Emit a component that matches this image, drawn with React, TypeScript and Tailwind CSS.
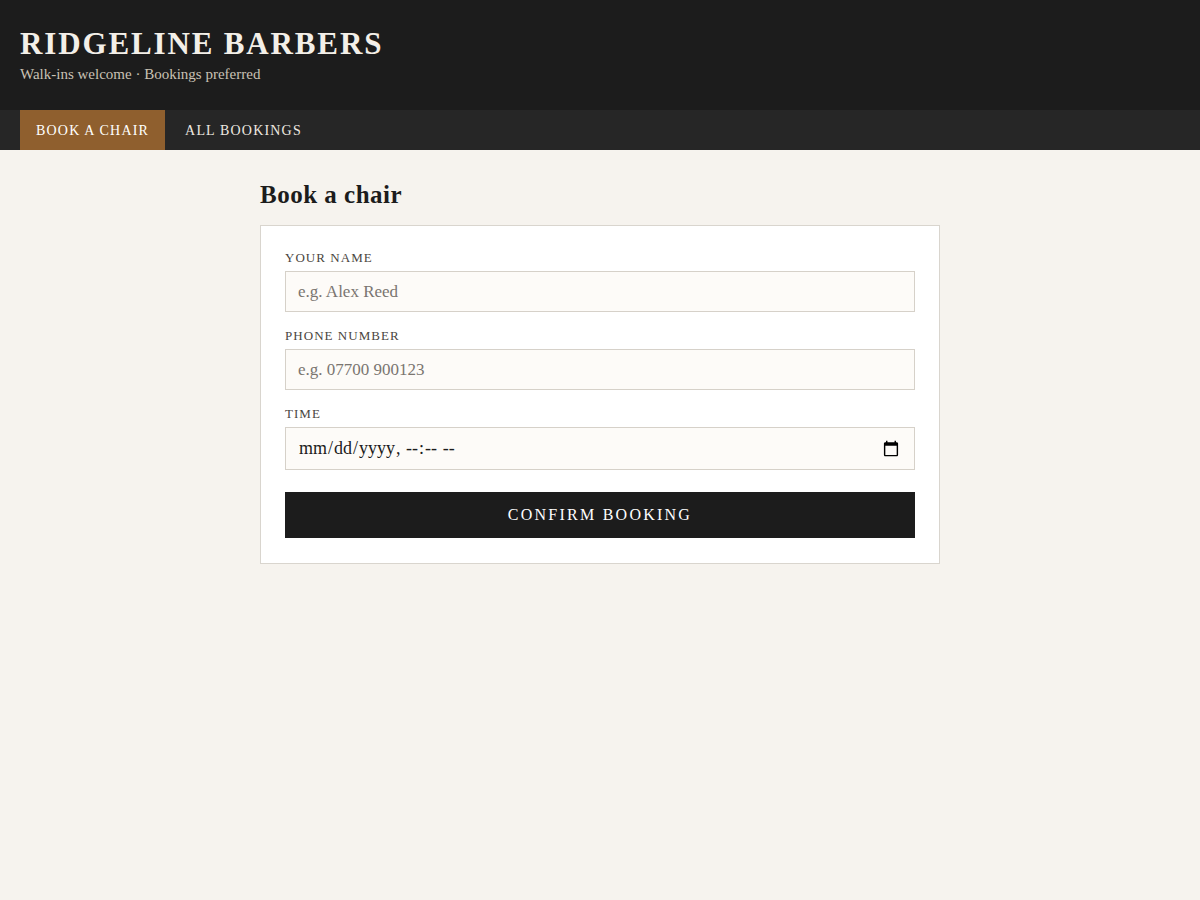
import React from 'react';

const serif = { fontFamily: '"Liberation Serif", "DejaVu Serif", serif' };

function Field({ label, children }: { label: string; children: React.ReactNode }) {
  return (
    <div className="flex flex-col">
      <label className="text-[13px] uppercase tracking-[0.08em] text-[#4a4540] mb-[5px] leading-[16px]">{label}</label>
      {children}
    </div>
  );
}

export default function App() {
  const inputClass =
    'w-full bg-[#fdfbf8] border border-[#d6d1c9] px-[12px] text-[17px] text-[#1c1c1c] placeholder:text-[#7a7570] outline-none';

  return (
    <div className="min-h-[900px] bg-[#f6f3ee] text-[#1c1c1c]" style={serif}>
      {/* Header */}
      <header className="bg-[#1c1c1c] h-[110px] px-[20px] pt-[27px]">
        <h1 className="text-[31px] font-bold tracking-[0.06em] text-[#f3efe8] leading-[34px]">RIDGELINE BARBERS</h1>
        <p className="text-[15px] text-[#c9c1b4] mt-[4px] leading-[18px]">Walk-ins welcome · Bookings preferred</p>
      </header>

      {/* Nav */}
      <nav className="bg-[#262626] h-[40px] px-[20px] flex">
        <a className="h-full px-[16px] flex items-center bg-[#8f5f2e] text-white text-[14px] uppercase tracking-[0.085em]">
          Book a chair
        </a>
        <a className="h-full px-[20px] flex items-center text-[#eee9e1] text-[14px] uppercase tracking-[0.085em]">
          All bookings
        </a>
      </nav>

      {/* Main */}
      <main className="w-[680px] mx-auto pt-[30px]">
        <h2 className="text-[25px] font-bold leading-[30px] mb-[15px] tracking-[0.02em]">Book a chair</h2>
        <div className="bg-white border border-[#d9d5ce] px-[24px] pt-[24px] pb-[25px] flex flex-col gap-[16px]">
          <Field label="Your name">
            <input className={inputClass + ' h-[41px]'} style={serif} placeholder="e.g. Alex Reed" />
          </Field>
          <Field label="Phone number">
            <input className={inputClass + ' h-[41px]'} style={serif} placeholder="e.g. 07700 900123" />
          </Field>
          <Field label="Time">
            <input type="datetime-local" className={inputClass + ' h-[43px] text-[18px]'} style={serif} />
          </Field>
          <button className="mt-[6px] h-[46px] w-full bg-[#1c1c1c] text-white text-[16px] uppercase tracking-[0.14em]" style={serif}>
            Confirm booking
          </button>
        </div>
      </main>
    </div>
  );
}
